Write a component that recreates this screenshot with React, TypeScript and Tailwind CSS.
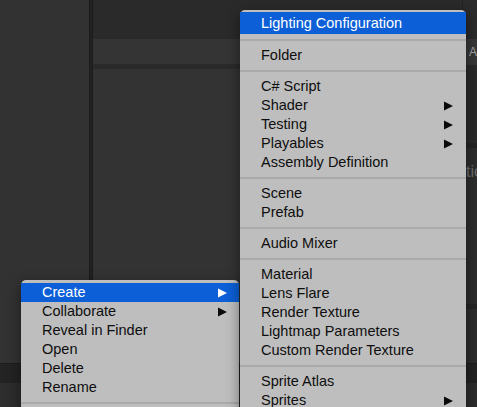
type Row =
  | { kind: "item"; label: string; sub?: boolean; active?: boolean; tall?: boolean }
  | { kind: "sep" };

const createMenu: Row[] = [
  { kind: "item", label: "Lighting Configuration", active: true, tall: true },
  { kind: "sep" },
  { kind: "item", label: "Folder" },
  { kind: "sep" },
  { kind: "item", label: "C# Script" },
  { kind: "item", label: "Shader", sub: true },
  { kind: "item", label: "Testing", sub: true },
  { kind: "item", label: "Playables", sub: true },
  { kind: "item", label: "Assembly Definition" },
  { kind: "sep" },
  { kind: "item", label: "Scene" },
  { kind: "item", label: "Prefab" },
  { kind: "sep" },
  { kind: "item", label: "Audio Mixer" },
  { kind: "sep" },
  { kind: "item", label: "Material" },
  { kind: "item", label: "Lens Flare" },
  { kind: "item", label: "Render Texture" },
  { kind: "item", label: "Lightmap Parameters" },
  { kind: "item", label: "Custom Render Texture" },
  { kind: "sep" },
  { kind: "item", label: "Sprite Atlas" },
  { kind: "item", label: "Sprites", sub: true },
];

const contextMenu: Row[] = [
  { kind: "item", label: "Create", sub: true, active: true },
  { kind: "item", label: "Collaborate", sub: true },
  { kind: "item", label: "Reveal in Finder" },
  { kind: "item", label: "Open" },
  { kind: "item", label: "Delete" },
  { kind: "item", label: "Rename" },
  { kind: "sep" },
];

function Arrow({ white }: { white?: boolean }) {
  return (
    <svg width="9" height="10" viewBox="0 0 9 10" className="shrink-0">
      <polygon points="0,0.5 9,5 0,9.5" fill={white ? "#ffffff" : "#0a0a0a"} />
    </svg>
  );
}

function MenuRows({ rows, arrowPad }: { rows: Row[]; arrowPad: string }) {
  return (
    <>
      {rows.map((r, i) =>
        r.kind === "sep" ? (
          <div key={i} className="h-[12px] flex items-center">
            <div className="h-[2px] w-full bg-[#aaaaaa]" />
          </div>
        ) : (
          <div
            key={i}
            className={`flex items-center justify-between pl-[21px] ${arrowPad} ${
              r.tall ? "h-[22px]" : "h-[19px]"
            } ${r.active ? "bg-[#0c5fd6] text-white" : "text-[#0e0e0e]"}`}
          >
            <span className="text-[14.5px] leading-none whitespace-nowrap">{r.label}</span>
            {r.sub && <Arrow white={r.active} />}
          </div>
        )
      )}
    </>
  );
}

export default function App() {
  return (
    <div className="relative w-[477px] h-[407px] overflow-hidden bg-[#333333] font-['Liberation_Sans',Arial,sans-serif]">
      <div className="flex flex-col h-full">
        <div className="flex h-[363px]">
          <div className="w-[89px] bg-[#323232]" />
          <div className="w-[4px] bg-[#222222] border-x border-[#1c1c1c]" />
          <div className="flex-1 flex flex-col">
            <div className="h-[39px] bg-[#2a2a2a]" />
            <div className="h-[25px] bg-[#343434]" />
            <div className="h-[5px] bg-[#2a2a2a]" />
            <div className="flex-1 bg-[#333333]" />
          </div>
          <div className="w-[15px] flex flex-col overflow-hidden border-l border-[#222222]">
            <div className="h-[39px] bg-[#2b2b2b]" />
            <div className="h-[26px] bg-[#383838] flex items-center pl-[6px] text-[12px] text-[#a8a8a8] whitespace-nowrap">
              Active
            </div>
            <div className="h-[78px] bg-[#2a2a2a]" />
            <div className="h-[5px] bg-[#242424]" />
            <div className="h-[156px] bg-[#2d2d2d] pt-[12px] pl-[3px] text-[16px] text-[#6e6e6e] whitespace-nowrap">
              tion
            </div>
            <div className="h-[5px] bg-[#252525]" />
            <div className="flex-1 bg-[#2d2d2d]" />
          </div>
        </div>
        <div className="flex-1 flex flex-col">
          <div className="h-[20px] bg-[#232323] border-t border-[#1d1d1d]" />
          <div className="flex-1 bg-[#2d2d2d]" />
        </div>
      </div>

      <div className="absolute left-[21px] top-[280px] w-[218px] h-[140px] pt-[3px] bg-[#bebebe] rounded-t-[5px] shadow-[0_4px_14px_rgba(0,0,0,0.45)]">
        <MenuRows rows={contextMenu} arrowPad="pr-[12px]" />
      </div>

      <div className="absolute left-[240px] top-[10px] w-[226px] pt-[2px] pb-[4px] bg-[#bebebe] rounded-t-[5px] shadow-[0_4px_14px_rgba(0,0,0,0.45)]">
        <MenuRows rows={createMenu} arrowPad="pr-[13px]" />
      </div>
    </div>
  );
}
